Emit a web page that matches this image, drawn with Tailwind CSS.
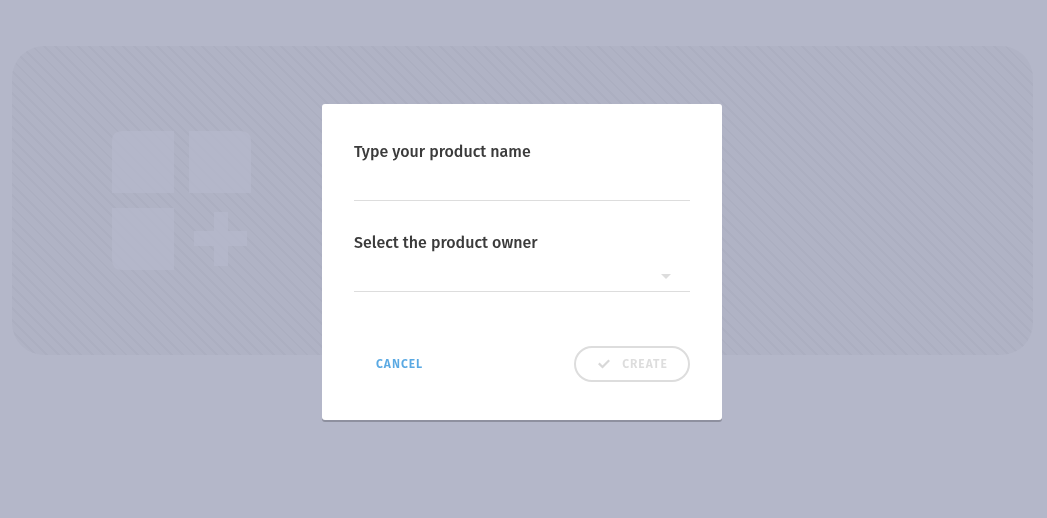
<!DOCTYPE html>
<html lang="en">
<head>
<meta charset="utf-8">
<meta name="viewport" content="width=device-width, initial-scale=1">
<title>New product</title>
<script src="https://cdn.jsdelivr.net/npm/@tailwindcss/browser@4"></script>
</head>
<body class="min-h-screen bg-[#b4b7c9] font-['Fira_Sans','Noto_Sans',sans-serif] text-[#3b3b3b]">
  <main class="pt-[46px] pr-3.5 pl-3">
    <section aria-label="Products" class="rounded-[32px] bg-[repeating-linear-gradient(45deg,#acafc1_0px,#acafc1_2px,#b0b3c5_2px,#b0b3c5_8px)] px-[100px] py-[85px]">
      <svg class="size-[139px]" viewBox="0 0 139 139" fill="#b5b8ca" fill-opacity="0.8" aria-hidden="true">
        <path d="M10 0H62V62H0V10Q0 0 10 0Z"/>
        <path d="M77 0H129Q139 0 139 10V62H77Z"/>
        <path d="M0 77H62V139H10Q0 139 0 129Z"/>
        <path d="M102 81H116V100H135V115H116V135H102V115H82V100H102Z"/>
      </svg>
    </section>
  </main>

  <div class="fixed inset-0 flex items-start justify-center overflow-auto px-4 pt-[104px]">
    <form role="dialog" aria-label="Create product" class="mr-[3px] w-full max-w-[400px] rounded-[3px] bg-white px-8 pt-9 pb-[38px] shadow-[0_2px_0_#8e909f]">
      <label for="name" class="block text-base leading-6 font-medium">Type your product name</label>
      <input id="name" type="text" class="mb-[30px] block h-[37px] w-full border-b border-[#dddddd] bg-transparent outline-none">
      <label for="owner" class="block text-base leading-6 font-medium">Select the product owner</label>
      <div class="relative">
        <select id="owner" class="block h-[37px] w-full appearance-none border-b border-[#dddddd] bg-transparent outline-none"><option value=""></option></select>
        <svg class="pointer-events-none absolute top-[19px] right-[19px] h-[5px] w-2.5" viewBox="0 0 10 5" fill="#dddddd" aria-hidden="true"><path d="M0 0H10L5 5Z"/></svg>
      </div>
      <div class="mt-[54px] flex items-center justify-between">
        <button type="button" class="h-9 px-[22px] text-xs font-semibold tracking-[1px] text-[#5aa9e3]">CANCEL</button>
        <button type="submit" disabled class="flex h-9 w-[116px] items-center justify-center gap-3 rounded-full border-2 border-[#dddddd] pl-0.5 text-xs font-semibold tracking-[1px] text-[#dddddd]">
          <svg class="h-2.5 w-3" viewBox="0 0 12 10" fill="none" stroke="#d8d8d8" stroke-width="2.2" aria-hidden="true"><path d="M0.8 4.4L4.5 8L11.2 1.2"/></svg>
          CREATE
        </button>
      </div>
    </form>
  </div>
</body>
</html>
